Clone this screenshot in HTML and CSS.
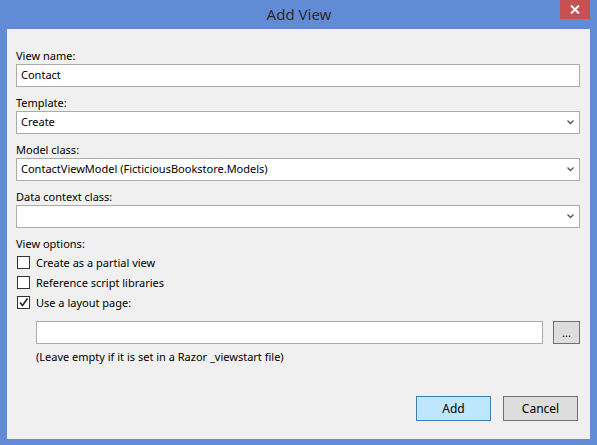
FILE: index.html
```html
<!DOCTYPE html>
<html>
<head>
<meta charset="utf-8">
<link rel="stylesheet" href="styles.css">
</head>
<body>
<div class="window">
  <div class="titlebar">
    <div class="title">Add View</div>
    <div class="close"><svg width="10" height="9" viewBox="0 0 10 9"><path d="M1 0.5 L9 8.5 M9 0.5 L1 8.5" stroke="#fff" stroke-width="2"/></svg></div>
  </div>
  <div class="client">
    <div class="field first">
      <div class="label">View name:</div>
      <div class="box">Contact</div>
    </div>
    <div class="field">
      <div class="label">Template:</div>
      <div class="box select">Create<span class="chev"><svg width="7" height="5" viewBox="0 0 7 5"><path d="M0.5 0.5 L3.5 3.5 L6.5 0.5" fill="none" stroke="#555" stroke-width="1.3"/></svg></span></div>
    </div>
    <div class="field">
      <div class="label">Model class:</div>
      <div class="box select">ContactViewModel (FicticiousBookstore.Models)<span class="chev"><svg width="7" height="5" viewBox="0 0 7 5"><path d="M0.5 0.5 L3.5 3.5 L6.5 0.5" fill="none" stroke="#555" stroke-width="1.3"/></svg></span></div>
    </div>
    <div class="field">
      <div class="label">Data context class:</div>
      <div class="box select"><span class="chev"><svg width="7" height="5" viewBox="0 0 7 5"><path d="M0.5 0.5 L3.5 3.5 L6.5 0.5" fill="none" stroke="#555" stroke-width="1.3"/></svg></span></div>
    </div>
    <div class="options">
      <div class="label">View options:</div>
      <div class="check"><span class="cb"></span>Create as a partial view</div>
      <div class="check"><span class="cb"></span>Reference script libraries</div>
      <div class="check"><span class="cb"><svg width="11" height="11" viewBox="0 0 11 11"><path d="M2 5.5 L4.5 8.5 L9.5 1.5" fill="none" stroke="#222" stroke-width="1.6"/></svg></span>Use a layout page:</div>
    </div>
    <div class="layout-row">
      <div class="box layout-box"></div>
      <div class="btn browse">...</div>
    </div>
    <div class="note">(Leave empty if it is set in a Razor _viewstart file)</div>
    <div class="buttons">
      <div class="btn primary">Add</div>
      <div class="btn">Cancel</div>
    </div>
  </div>
</div>
</body>
</html>
```
FILE: styles.css
```css
html, body {
  margin: 0;
  padding: 0;
}
body {
  background: #628bd6;
  width: 597px;
  height: 445px;
  overflow: hidden;
  font-family: "Noto Sans", "Open Sans", sans-serif;
  font-size: 11px;
  color: #000;
}
.window {
  display: flex;
  flex-direction: column;
  height: 445px;
}
.titlebar {
  height: 29px;
  display: flex;
  justify-content: center;
  position: relative;
}
.title {
  font-size: 15px;
  color: #2c2c2c;
  line-height: 28px;
  padding-left: 1px;
}
.close {
  position: absolute;
  left: 560px;
  top: 0;
  width: 30px;
  height: 19px;
  background: #c75050;
  display: flex;
  align-items: center;
  justify-content: center;
}
.client {
  background: #f0f0f0;
  margin: 0 7px 6px 7px;
  height: 410px;
  padding: 19px 10px 0 9px;
  box-sizing: border-box;
  display: flex;
  flex-direction: column;
}
.label {
  height: 16px;
  line-height: 16px;
  color: #000;
}
.field {
  margin-top: 8px;
}
.field.first {
  margin-top: 0;
}
.box {
  height: 23px;
  box-sizing: border-box;
  border: 1px solid #ababab;
  background: #fff;
  line-height: 20px;
  padding-left: 4px;
  position: relative;
}
.select .chev {
  position: absolute;
  right: 5px;
  top: 8px;
  display: flex;
}
.options {
  margin-top: 8px;
}
.check {
  height: 20px;
  display: flex;
  align-items: center;
}
.cb {
  width: 13px;
  height: 13px;
  box-sizing: border-box;
  border: 1px solid #333;
  background: #fff;
  margin: 0 6px 0 1px;
  display: flex;
  align-items: center;
  justify-content: center;
}
.layout-row {
  display: flex;
  margin-top: 9px;
  padding-left: 20px;
  gap: 10px;
}
.layout-box {
  flex: 1;
}
.btn {
  box-sizing: border-box;
  border: 1px solid #707070;
  background: #dddddd;
  height: 25px;
  display: flex;
  align-items: center;
  justify-content: center;
  font-size: 12px;
}
.browse {
  width: 27px;
  height: 23px;
  font-size: 11px;
  line-height: 1;
}
.note {
  margin-top: 5px;
  padding-left: 20px;
  line-height: 16px;
}
.buttons {
  margin-top: auto;
  margin-bottom: 18px;
  display: flex;
  justify-content: flex-end;
  gap: 12px;
  padding-right: 2px;
}
.buttons .btn {
  width: 75px;
}
.btn.primary {
  background: #bee6fd;
  border-color: #3c7fb1;
}
```
